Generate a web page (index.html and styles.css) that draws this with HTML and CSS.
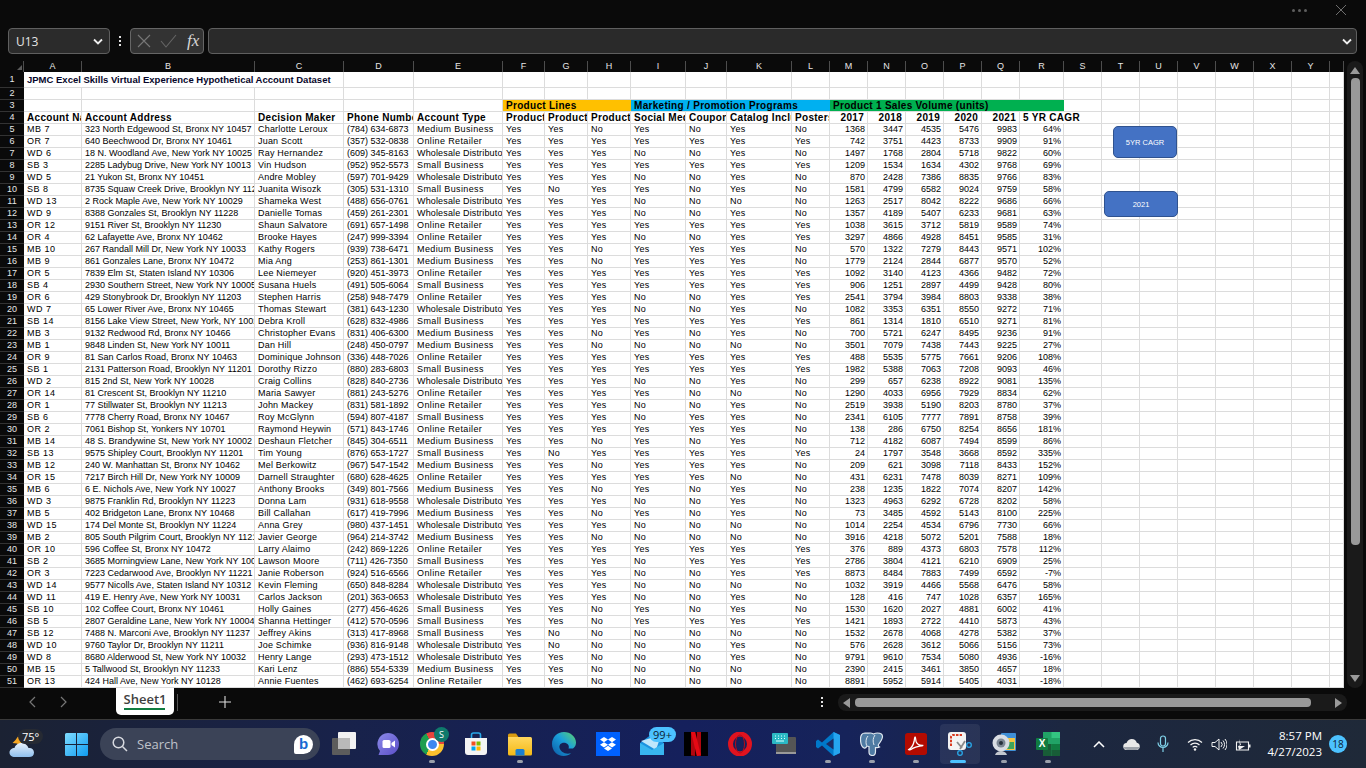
FILE: index.html
```html
<!DOCTYPE html>
<html lang="en">
<head>
    <meta charset="UTF-8">
    <meta name="viewport" content="width=device-width, initial-scale=1.0">
    <title>Sheet1 - Excel</title>
    <link rel="stylesheet" href="styles.css">
</head>
<body>
    <div class="titlebar">
        <span class="more-dots"><i></i><i></i><i></i></span>
        <svg class="close-x" width="12" height="12" viewBox="0 0 12 12"><path d="M1 1l10 10M11 1L1 11" stroke="#6e6e6e" stroke-width="1" fill="none"/></svg>
    </div>

    <div class="formula-bar">
        <div class="name-box">
            <span>U13</span>
            <svg width="10" height="7" viewBox="0 0 10 7"><path d="M1 1.5l4 4 4-4" stroke="#eee" stroke-width="1.8" fill="none"/></svg>
        </div>
        <div class="vdots"><i></i><i></i><i></i></div>
        <div class="fx-group">
            <svg width="14" height="14" viewBox="0 0 14 14"><path d="M1 1l12 12M13 1L1 13" stroke="#777" stroke-width="1.1" fill="none"/></svg>
            <svg width="17" height="14" viewBox="0 0 17 14"><path d="M1 7l5 6L16 1" stroke="#666" stroke-width="1.1" fill="none"/></svg>
            <span class="fx">fx</span>
        </div>
        <div class="formula-input">
            <svg width="10" height="7" viewBox="0 0 10 7"><path d="M1 1.5l4 4 4-4" stroke="#eee" stroke-width="1.8" fill="none"/></svg>
        </div>
    </div>

    <div class="grid-area">
        <div class="sheet">
            <table class="cells">
                <colgroup id="cols"></colgroup>
                <thead>
                    <tr id="letters"></tr>
                </thead>
                <tbody id="rows"></tbody>
            </table>
            <div class="corner"></div>
            <div class="shape shape-cagr">5YR CAGR</div>
            <div class="shape shape-year">2021</div>
        </div>
        <div class="vscroll">
            <svg width="10" height="7" viewBox="0 0 10 7"><path d="M5 0l5 7H0z" fill="#9a9a9a"/></svg>
            <div class="vthumb"></div>
            <svg class="vdown" width="10" height="7" viewBox="0 0 10 7"><path d="M5 7l5-7H0z" fill="#9a9a9a"/></svg>
        </div>
    </div>

    <div class="tabs">
        <svg class="nav nav-prev" width="8" height="12" viewBox="0 0 8 12"><path d="M7 1L2 6l5 5" stroke="#777" stroke-width="1.2" fill="none"/></svg>
        <svg class="nav" width="8" height="12" viewBox="0 0 8 12"><path d="M1 1l5 5-5 5" stroke="#777" stroke-width="1.2" fill="none"/></svg>
        <div class="tab">Sheet1</div>
        <div class="tab-sep"></div>
        <svg class="add-sheet" width="12" height="12" viewBox="0 0 12 12"><path d="M6 0v12M0 6h12" stroke="#ddd" stroke-width="1.1"/></svg>
        <div class="vdots tab-dots"><i></i><i></i><i></i></div>
        <div class="hscroll">
            <svg width="7" height="10" viewBox="0 0 7 10"><path d="M0 5l7-5v10z" fill="#9a9a9a"/></svg>
            <div class="hthumb"></div>
            <svg width="7" height="10" viewBox="0 0 7 10"><path d="M7 5L0 0v10z" fill="#9a9a9a"/></svg>
        </div>
    </div>

    <div class="taskbar">
        <div class="weather">
            <svg width="26" height="24" viewBox="0 0 26 24">
                <defs><linearGradient id="cloud" x1="0" y1="0" x2="0" y2="1"><stop offset="0" stop-color="#e8f1fb"/><stop offset="1" stop-color="#8fc0ee"/></linearGradient></defs>
                <path d="M10 1l1.5 4 4 1-3.5 2.5-1 4-3-3-4.5-.5 3-3z" fill="#f5a623"/>
                <path d="M6 23c-3.5 0-5.5-2-5.5-4.5S3 14 5.5 14c1-3.5 4-5 7-5 3.5 0 6 2 7 5 3-.5 5.5 1.5 5.5 4.5S23 23 20 23z" fill="url(#cloud)"/>
            </svg>
            <span class="temp">75°</span>
        </div>
        <div class="win-slot">
            <svg width="23" height="23" viewBox="0 0 23 23">
                <defs><linearGradient id="winb" x1="0" y1="0" x2="1" y2="1"><stop offset="0" stop-color="#7fdcff"/><stop offset="1" stop-color="#0f9bf0"/></linearGradient></defs>
                <path d="M0 1.5A1.5 1.5 0 0 1 1.5 0H11v11H0zM12 0h9.5A1.5 1.5 0 0 1 23 1.5V11H12zM0 12h11v11H1.5A1.5 1.5 0 0 1 0 21.5zM12 12h11v9.5a1.5 1.5 0 0 1-1.5 1.500H12z" fill="url(#winb)"/>
            </svg>
        </div>
        <div class="search-pill">
            <svg width="16" height="16" viewBox="0 0 16 16"><circle cx="6.5" cy="6.5" r="5.3" stroke="#d8dae0" stroke-width="1.5" fill="none"/><path d="M10.5 10.5L15 15" stroke="#d8dae0" stroke-width="1.5"/></svg>
            <span class="search-label">Search</span>
            <span class="bing">b</span>
        </div>

        <div class="apps">
            <div class="app">
                <svg width="24" height="24" viewBox="0 0 24 24"><rect x="6" y="0" width="18" height="17" rx="1" fill="#f2f2f2"/><rect x="0" y="6" width="18" height="17" rx="1" fill="#5c5c5c"/><rect x="6" y="6" width="12" height="11" fill="#b9b9b9"/></svg>
            </div>
            <div class="app">
                <svg width="24" height="24" viewBox="0 0 24 24"><defs><linearGradient id="meet" x1="0" y1="0" x2="1" y2="1"><stop offset="0" stop-color="#8b8ae8"/><stop offset="1" stop-color="#5b4fc9"/></linearGradient></defs><path d="M12 1a11 11 0 0 1 0 22H2.5L4 19A11 11 0 0 1 12 1z" fill="url(#meet)"/><rect x="6.5" y="8" width="8" height="8" rx="1.5" fill="#fff"/><path d="M15.5 11L19 8.5v7L15.5 13z" fill="#fff"/></svg>
            </div>
            <div class="app">
                <div class="chrome"><i></i></div>
                <span class="chrome-badge">S</span>
                <span class="run-dot"></span>
            </div>
            <div class="app">
                <svg width="24" height="24" viewBox="0 0 24 24"><path d="M7.5 6V3a2 2 0 0 1 2-2h5a2 2 0 0 1 2 2v3" stroke="#29a8e8" stroke-width="1.6" fill="none"/><path d="M1 6h22v14a3 3 0 0 1-3 3H4a3 3 0 0 1-3-3z" fill="#f4f4f4"/><rect x="7.5" y="9.5" width="4" height="4" fill="#f25022"/><rect x="12.5" y="9.5" width="4" height="4" fill="#7fba00"/><rect x="7.5" y="14.5" width="4" height="4" fill="#00a4ef"/><rect x="12.5" y="14.5" width="4" height="4" fill="#ffb900"/></svg>
            </div>
            <div class="app">
                <svg width="24" height="24" viewBox="0 0 24 24"><defs><linearGradient id="fold" x1="0" y1="0" x2="0" y2="1"><stop offset="0" stop-color="#ffd75e"/><stop offset="1" stop-color="#f5b916"/></linearGradient></defs><path d="M0 3a1.5 1.5 0 0 1 1.5-1.5H8L10.5 5H0z" fill="#d89a10"/><path d="M0 5h22.5A1.5 1.5 0 0 1 24 6.5V22a1.5 1.5 0 0 1-1.5 1.5h-21A1.5 1.5 0 0 1 0 22z" fill="url(#fold)"/><path d="M7.5 23.5v-5A1.5 1.5 0 0 1 9 17h6a1.5 1.5 0 0 1 1.5 1.5v5z" fill="#1b7fd1"/></svg>
                <span class="run-dot"></span>
            </div>
            <div class="app">
                <svg width="24" height="24" viewBox="0 0 24 24"><defs><linearGradient id="edge" x1="0" y1="1" x2="1" y2="0"><stop offset="0" stop-color="#0c59a4"/><stop offset=".55" stop-color="#1a9fdc"/><stop offset="1" stop-color="#5fd468"/></linearGradient></defs><path d="M12 0C5 0 0 5.5 0 12c0 6.5 5 12 11.5 12 3 0 5.5-1 7.5-2.8-3 1-6.5.5-9-1.5C7.5 17.5 6.5 14.5 8 12.5c2-2.5 6-2.5 8 0 1 1.3 1 3 .5 4H21c2-1.5 3-3.5 3-6C24 5 18.5 0 12 0z" fill="url(#edge)"/></svg>
            </div>
            <div class="app">
                <svg width="24" height="24" viewBox="0 0 24 24"><rect width="24" height="24" fill="#0061fe"/><path d="M8 5l4 2.6-4 2.6-4-2.6zM16 5l4 2.6-4 2.6-4-2.6zM8 10.2l4 2.6-4 2.6-4-2.6zM16 10.2l4 2.6-4 2.6-4-2.6zM8 16.4l4-2.6 4 2.6-4 2.6z" fill="#fff"/></svg>
            </div>
            <div class="app">
                <svg width="24" height="24" viewBox="0 0 24 24"><path d="M0 11l12-9 12 9v12H0z" fill="#1b93e0"/><path d="M1 9l20-6-5 15z" fill="#bfe6fb"/><path d="M0 11l12 7 12-7v12H0z" fill="#38b6f0"/></svg>
                <span class="mail-badge">99+</span>
            </div>
            <div class="app">
                <svg width="24" height="24" viewBox="0 0 24 24"><rect width="24" height="24" fill="#000"/><path d="M7 0h4.2v24L7 23.5z" fill="#b1060f"/><path d="M12.8 0H17v23.5L12.8 24z" fill="#b1060f"/><path d="M7 0h4.2L17 23.5 12.8 24z" fill="#e50914"/></svg>
            </div>
            <div class="app">
                <svg width="24" height="24" viewBox="0 0 24 24"><ellipse cx="12" cy="12" rx="9.5" ry="10" fill="none" stroke="#e0131f" stroke-width="5"/><ellipse cx="12" cy="12" rx="4.5" ry="9" fill="none" stroke="#b80b16" stroke-width="1"/></svg>
            </div>
            <div class="app">
                <svg width="24" height="24" viewBox="0 0 24 24"><rect x="4" y="5" width="20" height="17" rx="1" fill="#555"/><rect x="4" y="20" width="20" height="2" fill="#999"/><rect x="0" y="1" width="16" height="11" rx="1" fill="#2bb8c4"/><path d="M3 4h1M6 4h1M9 4h1M12 4h1M3 6.5h1M6 6.5h1M9 6.5h1M12 6.5h1M4 9h8" stroke="#dff" stroke-width="1"/></svg>
            </div>
            <div class="app">
                <svg width="24" height="24" viewBox="0 0 24 24"><path d="M17.5 0L24 3v18l-6.5 3L6 13.5l-4 3L0 15V9l2-1.5 4 3z" fill="#0078c9"/><path d="M17.5 0L24 3v18l-6.5 3z" fill="#25a5ef"/><path d="M17.5 6.5L10 12l7.5 5.5z" fill="#1b2a63"/></svg>
                <span class="run-dot"></span>
            </div>
            <div class="app">
                <svg width="24" height="24" viewBox="0 0 24 24"><path d="M5 1C2 1 .5 3.5.5 7c0 4 1.500 8 3.500 9 1.500.7 2.500-1 3-2 .5 0 1.500.5 2 .5L9 20c0 2 1.500 3.500 3.500 3.500 2.500 0 3-1.800 3-4v-4c1.500 0 2.500.5 4-.5-1-.5-1.500-1-1-2.500 1.500-2 4-5.500 4-8C22.500 2 20 1 17.500 1c-1.500 0-3 .5-4 1-1-.5-2-1-3-1-2 0-3 .5-5.500 0z" fill="#4f7ba3" stroke="#dfe7ef" stroke-width="1.2"/><path d="M15 3c-2 3-2.5 6-1 10M8 4c-2 2-2.5 6-1.5 9.5" fill="none" stroke="#dfe7ef" stroke-width="1"/></svg>
                <span class="run-dot"></span>
            </div>
            <div class="app">
                <svg width="22" height="22" viewBox="0 0 24 24"><rect x="0" y="0" width="24" height="24" rx="3" fill="#b30b00"/><path d="M4 18c3-1.5 5-5 6-9 .3-2 .2-4 1-4.500.8.500.5 3 1.200 5 1 2.500 3 4.500 7.800 4-3.500 1-8 1.500-11 3-2 1-3.500 3-5 1.500z" fill="none" stroke="#fff" stroke-width="1.4"/></svg>
                <span class="run-dot"></span>
            </div>
            <div class="app app-active">
                <svg width="24" height="24" viewBox="0 0 24 24"><rect x="0" y="0" width="18" height="18" rx="3" fill="#f3f3f3"/><path d="M3 14V5a2 2 0 0 1 2-2h9" fill="none" stroke="#d9391f" stroke-width="2" stroke-dasharray="2.5 1.2"/><path d="M9 10l5 6M17 9l-5 8" stroke="#8a8a8a" stroke-width="1.8"/><circle cx="21" cy="13" r="2.3" fill="none" stroke="#29a8e8" stroke-width="1.3"/><circle cx="12" cy="21" r="2.3" fill="none" stroke="#29a8e8" stroke-width="1.3"/></svg>
                <span class="run-bar"></span>
            </div>
            <div class="app">
                <svg width="24" height="24" viewBox="0 0 24 24"><rect x="9" y="1" width="15" height="18" rx="1" fill="#3f8fd6"/><rect x="12" y="6" width="11" height="12" fill="#f5c542"/><rect x="15" y="10" width="7" height="7" fill="#3fa45b"/><circle cx="9" cy="11" r="8.5" fill="#d9dde3"/><circle cx="9" cy="11" r="4.5" fill="#7c8794"/><circle cx="9" cy="11" r="2" fill="#26303b"/><path d="M3 23c1-3 3.5-4 6-4s5 1 6 4z" fill="#c3c8cf"/></svg>
                <span class="run-dot"></span>
            </div>
            <div class="app">
                <svg width="24" height="24" viewBox="0 0 24 24"><path d="M7 0h15a2 2 0 0 1 2 2v20a2 2 0 0 1-2 2H7z" fill="#21a366"/><rect x="15.5" y="0" width="8.5" height="6" fill="#33c481"/><rect x="7" y="12" width="8.5" height="12" fill="#185c37"/><rect x="15.5" y="12" width="8.5" height="6" fill="#107c41"/><rect x="15.5" y="18" width="8.5" height="6" fill="#185c37"/></svg>
                <span class="excel-x">X</span>
                <span class="run-dot"></span>
            </div>
        </div>

        <div class="tray">
            <div class="tray-slot"><svg width="12" height="7" viewBox="0 0 12 7"><path d="M1 6l5-5 5 5" stroke="#fff" stroke-width="1.5" fill="none"/></svg></div>
            <div class="tray-slot"><svg width="17" height="11" viewBox="0 0 17 11"><path d="M4 11a3.5 3.5 0 0 1-.5-7C4.500 1.500 6.500 0 8.800 0c2.600 0 4.400 1.600 5 3.700A3.700 3.700 0 0 1 13.500 11z" fill="#e8e8e8"/><path d="M1 8h15v1.5L13.5 11H4L1 9.5z" fill="#9ea3aa"/></svg></div>
            <div class="tray-slot"><svg width="12" height="18" viewBox="0 0 12 18"><rect x="3.5" y="1" width="5" height="10" rx="2.5" fill="none" stroke="#7fd1e8" stroke-width="1.2"/><path d="M1 7.5a5 5 0 0 0 10 0M6 12.5V17" fill="none" stroke="#7fd1e8" stroke-width="1.2"/></svg></div>
            <div class="tray-slot tray-small tray-first"><svg width="16" height="13" viewBox="0 0 16 13"><path d="M1 4.5a10 10 0 0 1 14 0M3.5 7a6.500 6.500 0 0 1 9 0M5.700 9.300a3.200 3.200 0 0 1 4.600 0" fill="none" stroke="#f2f2f2" stroke-width="1.2"/><circle cx="8" cy="11.5" r="1.2" fill="#f2f2f2"/></svg></div>
            <div class="tray-slot tray-small"><svg width="16" height="13" viewBox="0 0 16 13"><path d="M1 4.5h3L8 1v11L4 8.5H1z" fill="none" stroke="#f2f2f2" stroke-width="1"/><path d="M10 4a3.5 3.5 0 0 1 0 5M12 2.5a6 6 0 0 1 0 8M14 1a8.500 8.500 0 0 1 0 11" fill="none" stroke="#f2f2f2" stroke-width="1"/></svg></div>
            <div class="tray-slot tray-small"><svg width="16" height="13" viewBox="0 0 16 13"><path d="M1.5 4h12v8h-12z" fill="none" stroke="#f2f2f2" stroke-width="1.1"/><rect x="14" y="6.5" width="1.5" height="3" fill="#f2f2f2"/><path d="M4 1l2 6-3 1 1 4 6-4H5" fill="#f2f2f2"/></svg></div>
            <div class="clock">
                <span>8:57 PM</span>
                <span>4/27/2023</span>
            </div>
            <span class="notif">18</span>
        </div>
    </div>

    <script>
        const widths = [24, 58, 173, 89, 70, 89, 42, 43, 43, 55, 41, 65, 38, 38, 38, 38, 38, 38, 44, 38, 38, 38, 38, 38, 38, 38, 14];
        const letters = ' ABCDEFGHIJKLMNOPQRSTUVWXY'.split('').concat('');

        // name|address|decision maker|phone|type code|Y/N flags F-L|2017|2018|2019|2020|2021|cagr
        const data = `MB 7|323 North Edgewood St, Bronx NY 10457|Charlotte Leroux|(784) 634-6873|M|YYNYNYN|1368|3447|4535|5476|9983|64%
OR 7|640 Beechwood Dr, Bronx NY 10461|Juan Scott|(357) 532-0838|O|YYYYYYY|742|3751|4423|8733|9909|91%
WD 6|18 N. Woodland Ave, New York NY 10025|Ray Hernandez|(609) 345-8163|W|YYYNNYN|1497|1768|2804|5718|9822|60%
SB 3|2285 Ladybug Drive, New York NY 10013|Vin Hudson|(952) 952-5573|S|YYYYYYY|1209|1534|1634|4302|9768|69%
WD 5|21 Yukon St, Bronx NY 10451|Andre Mobley|(597) 701-9429|W|YYYNNYN|870|2428|7386|8835|9766|83%
SB 8|8735 Squaw Creek Drive, Brooklyn NY 11208|Juanita Wisozk|(305) 531-1310|S|YNYYNYN|1581|4799|6582|9024|9759|58%
WD 13|2 Rock Maple Ave, New York NY 10029|Shameka West|(488) 656-0761|W|YYYNNNN|1263|2517|8042|8222|9686|66%
WD 9|8388 Gonzales St, Brooklyn NY 11228|Danielle Tomas|(459) 261-2301|W|YYYNNYN|1357|4189|5407|6233|9681|63%
OR 12|9151 River St, Brooklyn NY 11230|Shaun Salvatore|(691) 657-1498|O|YYYYYYY|1038|3615|3712|5819|9589|74%
OR 4|62 Lafayette Ave, Bronx NY 10462|Brooke Hayes|(247) 999-3394|O|YYYNNYY|3297|4866|4928|8451|9585|31%
MB 10|267 Randall Mill Dr, New York NY 10033|Kathy Rogers|(939) 738-6471|M|YYNYYYN|570|1322|7279|8443|9571|102%
MB 9|861 Gonzales Lane, Bronx NY 10472|Mia Ang|(253) 861-1301|M|YYNYYYN|1779|2124|2844|6877|9570|52%
OR 5|7839 Elm St, Staten Island NY 10306|Lee Niemeyer|(920) 451-3973|O|YYYYYYY|1092|3140|4123|4366|9482|72%
SB 4|2930 Southern Street, New York NY 10005|Susana Huels|(491) 505-6064|S|YYYYYYY|906|1251|2897|4499|9428|80%
OR 6|429 Stonybrook Dr, Brooklyn NY 11203|Stephen Harris|(258) 948-7479|O|YYYNNYY|2541|3794|3984|8803|9338|38%
WD 7|65 Lower River Ave, Bronx NY 10465|Thomas Stewart|(381) 643-1230|W|YYYNNYN|1082|3353|6351|8550|9272|71%
SB 14|8156 Lake View Street, New York, NY 10021|Debra Kroll|(628) 832-4986|S|YYYYYYY|861|1314|1810|6510|9271|81%
MB 3|9132 Redwood Rd, Bronx NY 10466|Christopher Evans|(831) 406-6300|M|YYNYNYN|700|5721|6247|8495|9236|91%
MB 1|9848 Linden St, New York NY 10011|Dan Hill|(248) 450-0797|M|YYNNNNN|3501|7079|7438|7443|9225|27%
OR 9|81 San Carlos Road, Bronx NY 10463|Dominique Johnson|(336) 448-7026|O|YYYYYYY|488|5535|5775|7661|9206|108%
SB 1|2131 Patterson Road, Brooklyn NY 11201|Dorothy Rizzo|(880) 283-6803|S|YYYYYYY|1982|5388|7063|7208|9093|46%
WD 2|815 2nd St, New York NY 10028|Craig Collins|(828) 840-2736|W|YYYNNYN|299|657|6238|8922|9081|135%
OR 14|81 Crescent St, Brooklyn NY 11210|Maria Sawyer|(881) 243-5276|O|YYYYNNN|1290|4033|6956|7929|8834|62%
OR 1|77 Stillwater St, Brooklyn NY 11213|John Mackey|(831) 581-1892|O|YYYNNYN|2519|3938|5190|8203|8780|37%
SB 6|7778 Cherry Road, Bronx NY 10467|Roy McGlynn|(594) 807-4187|S|YYYNYYN|2341|6105|7777|7891|8758|39%
OR 2|7061 Bishop St, Yonkers NY 10701|Raymond Heywin|(571) 843-1746|O|YYYYYYN|138|286|6750|8254|8656|181%
MB 14|48 S. Brandywine St, New York NY 10002|Deshaun Fletcher|(845) 304-6511|M|YYNYNYN|712|4182|6087|7494|8599|86%
SB 13|9575 Shipley Court, Brooklyn NY 11201|Tim Young|(876) 653-1727|S|YNYYYYY|24|1797|3548|3668|8592|335%
MB 12|240 W. Manhattan St, Bronx NY 10462|Mel Berkowitz|(967) 547-1542|M|YYNYYYN|209|621|3098|7118|8433|152%
OR 15|7217 Birch Hill Dr, New York NY 10009|Darnell Straughter|(680) 628-4625|O|YYYYYNN|431|6231|7478|8039|8271|109%
MB 6|6 E. Nichols Ave, New York NY 10027|Anthony Brooks|(349) 801-7566|M|YYNYNYN|238|1235|1822|7074|8207|142%
WD 3|9875 Franklin Rd, Brooklyn NY 11223|Donna Lam|(931) 618-9558|W|YYYNNYN|1323|4963|6292|6728|8202|58%
MB 5|402 Bridgeton Lane, Bronx NY 10468|Bill Callahan|(617) 419-7996|M|YYNYNYN|73|3485|4592|5143|8100|225%
WD 15|174 Del Monte St, Brooklyn NY 11224|Anna Grey|(980) 437-1451|W|YYYNNNN|1014|2254|4534|6796|7730|66%
MB 2|805 South Pilgrim Court, Brooklyn NY 11215|Javier George|(964) 214-3742|M|YYNNNNN|3916|4218|5072|5201|7588|18%
OR 10|596 Coffee St, Bronx NY 10472|Larry Alaimo|(242) 869-1226|O|YYYYYYY|376|889|4373|6803|7578|112%
SB 2|3685 Morningview Lane, New York NY 10016|Lawson Moore|(711) 426-7350|S|YYYNYYY|2786|3804|4121|6210|6909|25%
OR 3|7223 Cedarwood Ave, Brooklyn NY 11221|Janie Roberson|(924) 516-6566|O|YYYNNYY|8873|8484|7883|7499|6592|-7%
WD 14|9577 Nicolls Ave, Staten Island NY 10312|Kevin Fleming|(650) 848-8284|W|YYYNNNN|1032|3919|4466|5568|6476|58%
WD 11|419 E. Henry Ave, New York NY 10031|Carlos Jackson|(201) 363-0653|W|YYYNNYN|128|416|747|1028|6357|165%
SB 10|102 Coffee Court, Bronx NY 10461|Holly Gaines|(277) 456-4626|S|YYNYNYN|1530|1620|2027|4881|6002|41%
SB 5|2807 Geraldine Lane, New York NY 10004|Shanna Hettinger|(412) 570-0596|S|YYNYYYY|1421|1893|2722|4410|5873|43%
SB 12|7488 N. Marconi Ave, Brooklyn NY 11237|Jeffrey Akins|(313) 417-8968|S|YNNNNNN|1532|2678|4068|4278|5382|37%
WD 10|9760 Taylor Dr, Brooklyn NY 11211|Joe Schimke|(936) 816-9148|W|YNNNNYN|576|2628|3612|5066|5156|73%
WD 8|8680 Alderwood St, New York NY 10032|Henry Lange|(293) 473-1512|W|YYNNNYN|9791|9610|7534|5080|4936|-16%
MB 15|5 Tallwood St, Brooklyn NY 11233|Kari Lenz|(886) 554-5339|M|YYNNNNN|2390|2415|3461|3850|4657|18%
OR 13|424 Hall Ave, New York NY 10128|Annie Fuentes|(462) 693-6254|O|YYNNNNN|8891|5952|5914|5405|4031|-18%`;

        const types = { M: 'Medium Business', O: 'Online Retailer', W: 'Wholesale Distributor', S: 'Small Business' };

        document.getElementById('cols').innerHTML = widths.map(w => `<col style="width:${w}px">`).join('');
        document.getElementById('letters').innerHTML = letters.map(l => `<th class="col-head">${l}</th>`).join('');

        function blanks(count) {
            return '<td></td>'.repeat(count);
        }

        let html = '';
        html += `<tr class="r-title"><th class="row-head">1</th><td colspan="3" class="title">JPMC Excel Skills Virtual Experience Hypothetical Account Dataset</td>${blanks(23)}</tr>`;
        html += `<tr><th class="row-head">2</th>${blanks(26)}</tr>`;
        html += `<tr><th class="row-head">3</th>${blanks(5)}
            <td colspan="3" class="band band-orange">Product Lines</td>
            <td colspan="4" class="band band-blue">Marketing / Promotion Programs</td>
            <td colspan="6" class="band band-green">Product 1 Sales Volume (units)</td>${blanks(8)}</tr>`;

        const heads = ['Account Name', 'Account Address', 'Decision Maker', 'Phone Number', 'Account Type', 'Product 1', 'Product 2', 'Product 3', 'Social Media', 'Coupons', 'Catalog Included', 'Posters'];
        html += `<tr class="r-head"><th class="row-head">4</th>${heads.map(h => `<td>${h}</td>`).join('')}
            ${['2017', '2018', '2019', '2020', '2021'].map(y => `<td class="num">${y}</td>`).join('')}
            <td colspan="2">5 YR CAGR</td>${blanks(7)}</tr>`;

        data.split('\n').forEach((line, index) => {
            const f = line.split('|');
            const flags = f[5].split('').map(c => `<td class="flag">${c === 'Y' ? 'Yes' : 'No'}</td>`).join('');
            const nums = f.slice(6).map(n => `<td class="num">${n}</td>`).join('');
            const typeClass = f[4] === 'W' ? 'type-wholesale' : 'type';
            html += `<tr><th class="row-head">${index + 5}</th><td class="acct">${f[0]}</td><td>${f[1]}</td><td class="maker">${f[2]}</td><td>${f[3]}</td><td class="${typeClass}">${types[f[4]]}</td>${flags}${nums}${blanks(8)}</tr>`;
        });

        document.getElementById('rows').innerHTML = html;
    </script>
</body>
</html>
```

FILE: styles.css
```css
* {
    box-sizing: border-box;
}
html, body {
    margin: 0;
    width: 1366px;
    height: 768px;
    overflow: hidden;
}
body {
    background-color: #0a0a0a;
    font-family: "Liberation Sans", Arial, sans-serif;
    display: flex;
    flex-direction: column;
}
svg {
    display: block;
    flex: none;
}

/* title bar and formula bar */
.titlebar {
    height: 28px;
    display: flex;
    align-items: center;
    justify-content: flex-end;
    padding: 0 19px 8px 0;
}
.more-dots {
    display: flex;
    gap: 3px;
    margin-right: 28px;
}
.more-dots i {
    width: 3px;
    height: 3px;
    border-radius: 50%;
    background-color: #5e5e5e;
}
.formula-bar {
    height: 26px;
    padding: 0 9px 0 8px;
    display: flex;
    align-items: stretch;
}
.name-box {
    width: 102px;
    background-color: #2b2b2b;
    border: 1px solid #5f5f5f;
    border-radius: 4px;
    display: flex;
    align-items: center;
    justify-content: space-between;
    padding: 0 6px 0 7px;
    color: #e4e4e4;
    font-family: "Open Sans", sans-serif;
    font-size: 12px;
}
.vdots {
    width: 20px;
    display: flex;
    flex-direction: column;
    align-items: center;
    justify-content: center;
    gap: 2px;
}
.vdots i {
    width: 2px;
    height: 2px;
    background-color: #e2e2e2;
}
.fx-group {
    width: 74px;
    background-color: #333;
    border: 1px solid #666;
    border-radius: 4px;
    display: flex;
    align-items: center;
    gap: 9px;
    padding-left: 6px;
}
.fx {
    font-family: "Liberation Serif", serif;
    font-style: italic;
    font-size: 17px;
    color: #d8d8d8;
    margin-left: 1px;
}
.formula-input {
    flex: 1;
    margin-left: 4px;
    background-color: #2a2a2a;
    border: 1px solid #5f5f5f;
    border-radius: 4px;
    display: flex;
    align-items: center;
    justify-content: flex-end;
    padding-right: 4px;
}

/* sheet */
.grid-area {
    margin-top: 7px;
    height: 627px;
    display: flex;
}
.sheet {
    width: 1344px;
    position: relative;
    overflow: hidden;
}
.cells {
    width: 1344px;
    table-layout: fixed;
    border-collapse: separate;
    border-spacing: 0;
    background-color: #fff;
    color: #000;
    font-size: 9px;
}
.cells tr {
    height: 12px;
}
.cells td {
    height: 12px;
    padding: 0 0 0 3px;
    border-right: 1px solid #dcdcdc;
    border-bottom: 1px solid #dcdcdc;
    line-height: 11px;
    white-space: nowrap;
    overflow: hidden;
}
.cells td.num {
    text-align: right;
    padding: 0 2px 0 0;
}
.cells td.acct {
    letter-spacing: 0.5px;
}
.cells td.maker {
    letter-spacing: 0.2px;
}
.cells td.type {
    letter-spacing: 0.38px;
}
.cells td.type-wholesale {
    letter-spacing: 0.15px;
}
.cells td.flag {
    letter-spacing: 0.3px;
}
.cells thead tr {
    height: 11px;
}
.col-head {
    height: 11px;
    padding: 0;
    background-color: #0a0a0a;
    color: #e6e6e6;
    font-weight: normal;
    font-size: 9px;
    line-height: 11px;
    border-right: 1px solid #4d4d4d;
}
.row-head {
    padding: 0;
    background-color: #0a0a0a;
    color: #e6e6e6;
    font-weight: normal;
    font-size: 9px;
    line-height: 11px;
    border-bottom: 1px solid #333;
}
.r-title {
    height: 16px !important;
}
.cells .title {
    height: 16px;
    font-weight: bold;
    font-size: 9.5px;
    color: #06062a;
}
.r-head td {
    font-weight: bold;
    font-size: 10px;
    letter-spacing: 0.3px;
}
.r-head td.num {
    padding-right: 3px;
}
.cells .band {
    font-weight: bold;
    font-size: 10px;
    letter-spacing: 0.3px;
    border-right: none;
    border-bottom: 1px solid #dcdcdc;
}
.band-orange {
    background-color: #ffc000;
}
.band-blue {
    background-color: #00b0f0;
}
.band-green {
    background-color: #00b050;
}
.corner {
    position: absolute;
    left: 17px;
    top: 4px;
    width: 0;
    height: 0;
    border-left: 5px solid transparent;
    border-bottom: 5px solid #5a5a5a;
}
.shape {
    position: absolute;
    background-color: #4472c4;
    border: 1px solid #2f528f;
    border-radius: 5px;
    color: #fff;
    font-size: 7.5px;
    display: flex;
    align-items: center;
    justify-content: center;
}
.shape-cagr {
    left: 1113px;
    top: 65px;
    width: 64px;
    height: 32px;
}
.shape-year {
    left: 1104px;
    top: 130px;
    width: 74px;
    height: 26px;
}
.vscroll {
    width: 16px;
    margin-left: 3px;
    background-color: #1a1a1a;
    border-radius: 8px;
    display: flex;
    flex-direction: column;
    align-items: center;
    padding-top: 6px;
}
.vthumb {
    width: 9px;
    height: 467px;
    margin-top: 4px;
    background-color: #999;
    border-radius: 4px;
}
.vdown {
    margin-top: auto;
    margin-bottom: 6px;
}

/* tabs */
.tabs {
    height: 32px;
    display: flex;
    align-items: flex-start;
    border-bottom: 1px solid #3a3a3a;
}
.nav {
    margin-top: 8px;
    margin-left: 24px;
}
.nav-prev {
    margin-left: 28px;
}
.tab {
    width: 58px;
    height: 27px;
    margin-left: 48px;
    background-color: #fff;
    border-radius: 0 0 5px 5px;
    color: #3f3f3f;
    font-family: "Open Sans", sans-serif;
    font-weight: 600;
    font-size: 13px;
    line-height: 22px;
    text-align: center;
    position: relative;
}
.tab::after {
    content: "";
    position: absolute;
    left: 8px;
    right: 9px;
    bottom: 5px;
    height: 2px;
    background-color: #107c41;
}
.tab-sep {
    width: 1px;
    height: 17px;
    margin: 6px 0 0 3px;
    background-color: #555;
}
.add-sheet {
    margin: 8px 0 0 41px;
}
.tab-dots {
    width: 14px;
    height: 20px;
    margin: 4px 9px 0 auto;
}
.hscroll {
    width: 509px;
    height: 17px;
    margin: 6px 19px 0 0;
    background-color: #1a1a1a;
    border-radius: 8px;
    display: flex;
    align-items: center;
    padding: 0 5px;
}
.hthumb {
    width: 456px;
    height: 9px;
    margin: 0 auto 0 5px;
    background-color: #999;
    border-radius: 4px;
}

/* taskbar */
.taskbar {
    height: 48px;
    background: linear-gradient(90deg, #1b2233 0%, #18224a 25%, #15205c 50%, #16235a 62%, #1c2740 78%, #1f2938 100%);
    display: flex;
    align-items: center;
    color: #fff;
    font-family: "Open Sans", sans-serif;
}
.weather {
    width: 54px;
    height: 48px;
    position: relative;
}
.weather svg {
    position: absolute;
    left: 9px;
    top: 14px;
}
.temp {
    position: absolute;
    left: 18px;
    top: 9px;
    background-color: #262a33;
    border-radius: 8px;
    padding: 0 4px;
    font-size: 11px;
    line-height: 15px;
}
.win-slot {
    width: 44px;
    display: flex;
    justify-content: center;
}
.search-pill {
    width: 220px;
    height: 32px;
    margin: 0 2px;
    background-color: #3b4357;
    border-radius: 16px;
    display: flex;
    align-items: center;
    padding: 0 7px 0 12px;
}
.search-label {
    margin-left: 9px;
    font-size: 13px;
    color: #bfc2ca;
}
.bing {
    margin-left: auto;
    width: 19px;
    height: 19px;
    border-radius: 50% 50% 50% 10%;
    background-color: #fff;
    color: #1769d2;
    font-family: "Liberation Sans", sans-serif;
    font-weight: bold;
    font-size: 15px;
    line-height: 18px;
    text-align: center;
}
.apps {
    display: flex;
}
.app {
    width: 44px;
    height: 48px;
    position: relative;
    display: flex;
    align-items: center;
    justify-content: center;
}
.app-active::before {
    content: "";
    position: absolute;
    left: 2px;
    right: 2px;
    top: 4px;
    bottom: 4px;
    background-color: rgba(255, 255, 255, 0.07);
    border-radius: 4px;
}
.app-active svg {
    position: relative;
}
.run-dot {
    position: absolute;
    left: 19px;
    bottom: 5px;
    width: 6px;
    height: 3px;
    border-radius: 2px;
    background-color: #9aa0ab;
}
.run-bar {
    position: absolute;
    left: 12px;
    bottom: 5px;
    width: 16px;
    height: 3px;
    border-radius: 2px;
    background-color: #4cc2ff;
}
.chrome {
    width: 24px;
    height: 24px;
    border-radius: 50%;
    background: conic-gradient(from -30deg, #e8453c 0 120deg, #fbc02d 120deg 240deg, #1e9e4f 240deg 360deg);
    display: flex;
    align-items: center;
    justify-content: center;
}
.chrome i {
    width: 9px;
    height: 9px;
    border-radius: 50%;
    background-color: #3d87f0;
    border: 2px solid #fff;
    box-sizing: content-box;
}
.chrome-badge {
    position: absolute;
    left: 24px;
    top: 7px;
    width: 15px;
    height: 15px;
    border-radius: 50%;
    background-color: #0f7a6c;
    font-size: 9px;
    line-height: 15px;
    text-align: center;
}
.mail-badge {
    position: absolute;
    left: 19px;
    top: 7px;
    width: 27px;
    height: 15px;
    border-radius: 8px;
    background-color: #4cc2ff;
    color: #0b1a33;
    font-size: 11px;
    line-height: 15px;
    text-align: center;
}
.excel-x {
    position: absolute;
    left: 10px;
    top: 18px;
    width: 12px;
    height: 12px;
    background-color: #107c41;
    border-radius: 1px;
    font-family: "Liberation Sans", sans-serif;
    font-weight: bold;
    font-size: 10px;
    line-height: 12px;
    text-align: center;
}
.tray {
    display: flex;
    align-items: center;
    margin-left: 13px;
}
.tray-slot {
    width: 32px;
    display: flex;
    justify-content: center;
}
.tray-small {
    width: 24px;
}
.tray-first {
    margin-left: 4px;
}
.clock {
    width: 67px;
    display: flex;
    flex-direction: column;
    align-items: flex-end;
    font-size: 11.5px;
    line-height: 16px;
}
.notif {
    width: 18px;
    height: 18px;
    margin-left: 7px;
    border-radius: 50%;
    background-color: #4cc2ff;
    color: #0b1a33;
    font-size: 10px;
    line-height: 18px;
    text-align: center;
}
```
